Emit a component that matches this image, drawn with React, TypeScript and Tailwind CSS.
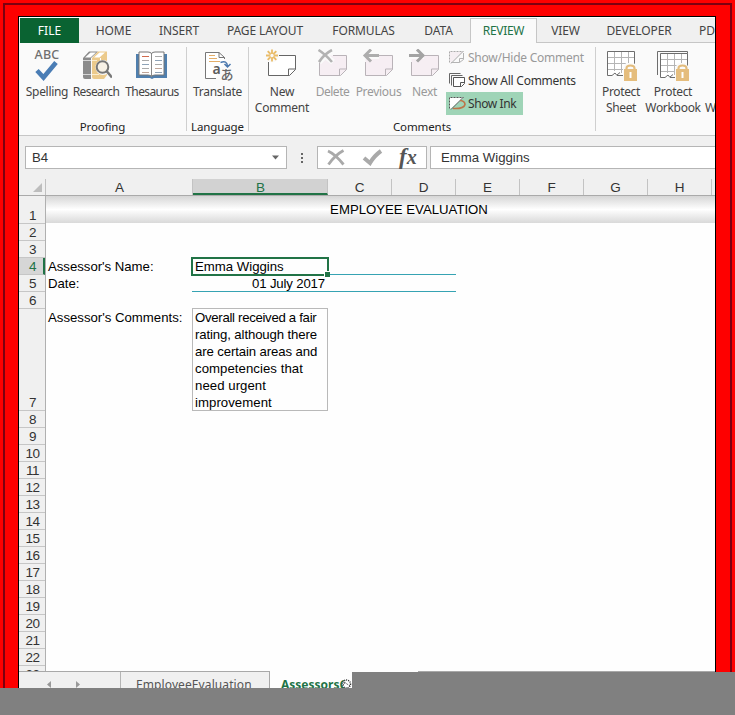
import type { ReactNode } from "react";
import clsx from "clsx";

const tabs = [
  { name: "HOME", width: "w-[69px]" },
  { name: "INSERT", width: "w-[62px]" },
  { name: "PAGE LAYOUT", width: "w-[110px]" },
  { name: "FORMULAS", width: "w-[87px]" },
  { name: "DATA", width: "w-[63px]" },
  { name: "REVIEW", width: "w-[67px]", active: true },
  { name: "VIEW", width: "w-[57px]" },
  { name: "DEVELOPER", width: "w-[90px]" },
];

const columns = [
  { name: "A", width: "w-[147px]" },
  { name: "B", width: "w-[135px]" },
  { name: "C", width: "w-16" },
  { name: "D", width: "w-16" },
  { name: "E", width: "w-16" },
  { name: "F", width: "w-16" },
  { name: "G", width: "w-16" },
  { name: "H", width: "w-16" },
];

const rows = Array.from({ length: 23 }, (_, i) => i + 1);

function SpellingIcon() {
  return (
    <div className="flex flex-col items-center">
      <span className="h-[12px] text-[12.5px] leading-[12px] font-medium tracking-[0.3px] text-[#6f6f6f]">ABC</span>
      <svg width="24" height="20" viewBox="0 0 24 20" fill="none">
        <path d="M2 9.5 L8.5 16.5 L21 1.5" stroke="#4a7db5" strokeWidth="4.6" />
      </svg>
    </div>
  );
}

function ResearchIcon() {
  return (
    <svg width="32" height="32" viewBox="0 0 32 32" fill="none">
      <path d="M3 9 L9 2.5 H18 L11 9 V30 H5 Q3 30 3 28 Z" fill="#8b8b8b" />
      <path d="M5 8.5 L10.5 3.5 H16 L10.5 8.5 Z" fill="#fff" />
      <path d="M3 11.5 H11 M3 25.5 H11" stroke="#d5d5d5" />
      <path d="M12 9 L18 2.5 H27 V26 L24 30 H14 Q12 30 12 28 Z" fill="#ecca8b" />
      <path d="M14 8.5 L19.5 3.5 H25 L19.5 8.5 Z" fill="#fff" />
      <path d="M12 11.5 H17 M12 25.5 H19" stroke="#fbeccc" />
      <path d="M20.5 9 V13" stroke="#fff" />
      <circle cx="23" cy="18.5" r="7.5" fill="#fafafa" />
      <circle cx="22.5" cy="18" r="5.8" fill="#f7f1e6" stroke="#777" strokeWidth="2" />
      <path d="M26.5 22 L32 28.5" stroke="#777" strokeWidth="2.6" />
    </svg>
  );
}

function ThesaurusIcon() {
  return (
    <svg width="32" height="32" viewBox="0 0 32 32" fill="none">
      <path d="M0 5 H31 V29 H18 L16 30 L14 29 H0 Z" fill="#4f7fae" />
      <path d="M3 3 H12 Q15.5 3 15.5 5 Q15.5 3 19 3 H28 V26 H19 Q15.5 26 15.5 28 Q15.5 26 12 26 H3 Z" fill="#fff" stroke="#777" />
      <path d="M15.5 5 V28" stroke="#888" />
      <path d="M6 7.5 H13" stroke="#d06b4f" />
      <path d="M6 11.5 H13 M6 19.5 H13 M19 7.5 H26 M19 15.5 H26" stroke="#aaa" />
      <path d="M6 15.5 H13 M19 11.5 H26 M19 23.5 H26" stroke="#8ea3b8" />
      <path d="M6 23.5 H13 M19 19.5 H26" stroke="#c0a598" />
    </svg>
  );
}

function TranslateIcon() {
  return (
    <div className="relative h-8 w-8">
      <svg width="32" height="32" viewBox="0 0 32 32" fill="none">
        <path d="M22.5 10 V8.5 L17 3.5 H3.5 V29.5 H14" fill="#fff" stroke="#777" />
        <path d="M17 3.5 V8.5 H22.5" stroke="#777" />
        <path d="M7 6.5 H13 M7 9.5 H15 M7 12.5 H18" stroke="#e4ae68" />
        <path d="M18.5 13.5 Q25 11 25.5 17 M22.5 15 L25.5 18 L28.5 15" stroke="#4a78ae" strokeWidth="1.5" />
      </svg>
      <span className="absolute top-[11px] left-[11px] text-[14px] leading-[18px] font-semibold text-[#5c5c5c]">a</span>
      <span className="absolute top-[17px] left-[19px] font-['Noto_Sans_CJK_JP',sans-serif] text-[13px] leading-[15px] font-medium text-[#666]">あ</span>
    </div>
  );
}

type NoteKind = "new" | "delete" | "previous" | "next";

function NoteIcon({ kind }: { kind: NoteKind }) {
  const line = kind === "new" ? "#666" : "#b9b3b8";
  const width = kind === "new" ? 34 : 35;
  return (
    <svg width={width} height="32" viewBox={`0 0 ${width} 32`} fill="none">
      <g transform={kind === "new" ? "translate(-1 0)" : undefined}>
        <path d="M4.5 6.5 H31.5 V20.5 L24.5 26.5 H4.5 Z" fill={kind === "new" ? "#fff" : "#f6eef3"} />
        <path
          d={
            kind === "new"
              ? "M15 6.5 H31.5 V20.5 L25.5 26.5 H4.5 V13"
              : "M18 6.5 H31.5 V20.5 L25.5 26.5 H4.5 V13"
          }
          stroke={line}
        />
        <path d="M31.5 20 H24.5 V26.5" stroke={line} />
      </g>
      {kind === "new" && (
        <g>
          <circle cx="7" cy="6.5" r="7" fill="#fafafa" />
          <path d="M7 0.5 V4 M7 9 V12.5 M1 6.5 H4.5 M9.5 6.5 H13 M2.7 2.2 L5 4.5 M9 8.5 L11.3 10.8 M2.7 10.8 L5 8.5 M9 4.5 L11.3 2.2" stroke="#e9bc69" strokeWidth="1.8" />
          <circle cx="7" cy="6.5" r="2.3" stroke="#e9bc69" strokeWidth="1.2" />
        </g>
      )}
      {kind === "delete" && (
        <g>
          <path d="M3 1 L18 13 M17 0 L4 13" stroke="#fafafa" strokeWidth="6" />
          <path d="M3.5 1 Q10 5 17 13 M17 1 Q9 5 4 13" stroke="#b3b3b3" strokeWidth="2.6" />
        </g>
      )}
      {kind === "previous" && (
        <g>
          <path d="M0 6.5 H18" stroke="#fafafa" strokeWidth="7" />
          <path d="M4 6.5 H18 M10 0.5 L4 6.5 L10 12.5" stroke="#adadad" strokeWidth="3" />
        </g>
      )}
      {kind === "next" && (
        <g>
          <path d="M1 6.5 H17" stroke="#fafafa" strokeWidth="7" />
          <path d="M2 6.5 H16 M10 0.5 L16 6.5 L10 12.5" stroke="#a3a3a3" strokeWidth="3" />
        </g>
      )}
    </svg>
  );
}

function ProtectIcon({ workbook }: { workbook?: boolean }) {
  return (
    <svg width="32" height="33" viewBox="0 0 32 33" fill="none">
      {workbook && <path d="M0.5 26 V2.5 H30.5 V5" stroke="#6d6d6d" />}
      <g transform={workbook ? "translate(3 4)" : "translate(2 2)"}>
        <path d="M0.5 0.5 H28 V24 H16 L12 21 L8 24 H0.5 Z" fill="#fff" />
        <path d="M7.5 0.5 V20 M14.5 0.5 V22 M21.5 0.5 V16 M0.5 6.5 H28 M0.5 12.5 H28 M0.5 18.5 H18" stroke="#b5b5b5" />
        <path d="M16 24.5 H10 L8 22 L5 24.5 H0.5 V0.5 H27.5 V13 M10 24 L13 21.5" stroke="#6d6d6d" />
      </g>
      <path d="M18 32 V19 L21 14 H29 L32 19 V32 Z" fill="#fafafa" />
      <path d="M21.5 22 V19.5 Q21.5 16.5 25.5 16.5 Q29.5 16.5 29.5 19.5 V22" stroke="#e3bc7c" strokeWidth="2.2" />
      <rect x="19" y="20" width="13" height="12" fill="#e5bd7d" />
      <path d="M25.5 23 V29" stroke="#fff" strokeWidth="2" />
    </svg>
  );
}

function InkIcon({ muted }: { muted?: boolean }) {
  return (
    <svg width="17" height="15" viewBox="0 0 17 15" fill="none">
      <path d="M0.5 1.5 H14.5 L2 12.5 H0.5 Z" fill={muted ? "#f5eef2" : "#fff"} />
      <path d="M0.5 12.5 V1.5 H14.5" stroke={muted ? "#aaa" : "#555"} strokeDasharray="2 1" />
      <path d="M2 13.5 L14 1.5" stroke={muted ? "#aaa" : "#666"} />
      {muted ? (
        <path d="M14.5 3 V9.5 L10.5 12.5 H2 M14.5 8.5 H10.5 V12.5" stroke="#b4b4b4" />
      ) : (
        <path d="M11 4.5 Q16 5 16 8.5 Q15 13 4 12.5" stroke="#bd7448" strokeWidth="1.6" />
      )}
    </svg>
  );
}

function AllCommentsIcon() {
  return (
    <svg width="17" height="15" viewBox="0 0 17 15" fill="none">
      <path d="M0.5 10.5 V0.5 H11.5 M2.5 12.5 V2.5 H13.5" stroke="#666" />
      <path d="M4.5 4.5 H15.5 V10.5 L12.5 13.5 H4.5 Z M15.5 9.5 H11.5 V13.5" fill="#fff" stroke="#555" />
    </svg>
  );
}

type RibbonButtonProps = { icon: ReactNode; label: string; width: string; tracking?: string; muted?: boolean };

function RibbonButton({ icon, label, width, tracking = "tracking-[-0.3px]", muted }: RibbonButtonProps) {
  return (
    <div className={clsx("flex shrink-0 flex-col items-center", width, muted ? "text-[#999]" : "text-[#444]")}>
      <div className="flex h-[34px] items-start">{icon}</div>
      <span className={clsx("mt-[1px] text-center text-[12px] leading-4 whitespace-pre", tracking)}>{label}</span>
    </div>
  );
}

function RibbonGroup({ name, width, className, children }: { name: string; width: string; className?: string; children: ReactNode }) {
  return (
    <div className={clsx("flex h-[92px] shrink-0 pt-1 pb-1", width)}>
      <div className="flex grow flex-col border-r border-[#cfcfcf]">
        <div className={clsx("flex h-[72px] shrink-0", className)}>{children}</div>
        <div className="-mb-1 text-center text-[11.5px] leading-4 tracking-[-0.1px] text-[#222]">{name}</div>
      </div>
    </div>
  );
}

function Ribbon() {
  return (
    <div className="flex h-[93px] shrink-0 overflow-hidden border-b border-[#c6c6c6] bg-[#fafafa]">
      <RibbonGroup name="Proofing" width="w-[168px]" className="pl-[5px] pt-[2px]">
        <RibbonButton icon={<SpellingIcon />} label="Spelling" width="w-[46px]" />
        <RibbonButton icon={<ResearchIcon />} label="Research" width="w-[52px]" tracking="tracking-[-0.6px]" />
        <RibbonButton icon={<ThesaurusIcon />} label="Thesaurus" width="w-[60px]" tracking="tracking-[-0.6px]" />
      </RibbonGroup>
      <RibbonGroup name="Language" width="w-[62px]" className="justify-center pt-[2px]">
        <RibbonButton icon={<TranslateIcon />} label="Translate" width="w-[60px]" />
      </RibbonGroup>
      <RibbonGroup name="Comments" width="w-[347px]" className="pl-1 pt-[2px]">
        <RibbonButton icon={<NoteIcon kind="new" />} label={"New\nComment"} width="w-[58px]" tracking="tracking-[-0.2px]" />
        <RibbonButton icon={<NoteIcon kind="delete" />} label="Delete" width="w-[43px]" tracking="tracking-[-0.5px]" muted />
        <RibbonButton icon={<NoteIcon kind="previous" />} label="Previous" width="w-[49px]" muted />
        <RibbonButton icon={<NoteIcon kind="next" />} label="Next" width="w-[43px]" muted />
        <div className="-mt-[3px] flex flex-col items-start text-[12px] tracking-[-0.25px] text-[#333]">
          <div className="flex h-[23px] items-center gap-[2px] pl-[3px] whitespace-nowrap text-[#999]">
            <InkIcon muted />
            Show/Hide Comment
          </div>
          <div className="flex h-[23px] items-center gap-[2px] pl-[3px] whitespace-nowrap">
            <AllCommentsIcon />
            Show All Comments
          </div>
          <div className="flex h-[23px] w-[77px] items-center gap-[2px] bg-[#9fd4b7] pl-[3px] tracking-[-0.4px] whitespace-nowrap">
            <InkIcon />
            Show Ink
          </div>
        </div>
      </RibbonGroup>
      <div className="flex pt-[6px] pl-[1px]">
        <RibbonButton icon={<ProtectIcon />} label={"Protect\nSheet"} width="w-[48px]" tracking="tracking-[-0.35px]" />
        <RibbonButton icon={<ProtectIcon workbook />} label={"Protect\nWorkbook"} width="w-[56px]" />
        <span className="mt-[51px] ml-1 text-[12px] leading-4 text-[#444]">W</span>
      </div>
    </div>
  );
}

function FormulaBar() {
  return (
    <div className="flex h-[43px] shrink-0 pt-[10px] pl-[6px] font-['Liberation_Sans',sans-serif] text-[13.2px] text-[#333]">
      <div className="flex h-[23px] w-[262px] shrink-0 items-center justify-between border border-[#b5b5b5] bg-white pr-[6px] pl-[6px]">
        B4
        <svg width="9" height="5" viewBox="0 0 9 5">
          <path d="M1 0.5 H8 L4.5 4.5 Z" fill="#666" />
        </svg>
      </div>
      <div className="flex h-[23px] w-[30px] shrink-0 flex-col items-center justify-center gap-[2px]">
        <i className="h-[2px] w-[2px] bg-[#666]" />
        <i className="h-[2px] w-[2px] bg-[#666]" />
        <i className="h-[2px] w-[2px] bg-[#666]" />
      </div>
      <div className="flex h-[23px] w-[110px] shrink-0 items-center border border-[#b5b5b5] bg-white pl-[9px]">
        <svg width="18" height="17" viewBox="0 0 18 17" fill="none">
          <path d="M1 2 Q8 5 16.5 15.5 M16.5 1.5 Q8 6 1.5 15.5" stroke="#a9a9a9" strokeWidth="2.8" />
        </svg>
        <svg className="ml-[17px]" width="21" height="17" viewBox="0 0 21 17" fill="none">
          <path d="M2 9 L8 14 Q12 7 19 2" stroke="#a9a9a9" strokeWidth="4" />
        </svg>
        <span className="mt-[-1px] ml-[16px] font-['Liberation_Serif',serif] text-[23px] leading-[22px] font-bold text-[#555] italic">
          f<span className="text-[20px]">x</span>
        </span>
      </div>
      <div className="ml-[3px] flex h-[23px] grow items-center border border-r-0 border-[#b5b5b5] bg-white pl-[10px]">Emma Wiggins</div>
    </div>
  );
}

function ColumnHeaders() {
  return (
    <div className="flex h-[17px] shrink-0 overflow-hidden border-b border-[#aaa] text-[13.5px] text-[#333]">
      <div className="flex w-[27px] shrink-0 items-end justify-end border-r border-[#c0c0c0] pr-[3px] pb-[3px]">
        <svg width="9" height="9" viewBox="0 0 9 9">
          <path d="M9 0 V9 H0 Z" fill="#bdbdbd" />
        </svg>
      </div>
      {columns.map((col) => (
        <div
          key={col.name}
          className={clsx(
            "h-4 shrink-0 border-r border-[#c3c3c3] text-center leading-[17px]",
            col.width,
            col.name === "A" && "pl-[1px]",
            col.name === "B" && "border-b-2 border-b-[#217346] bg-[#d2d2d2] pl-[1px] text-[#217346]"
          )}
        >
          {col.name}
        </div>
      ))}
    </div>
  );
}

function RowHeaders() {
  return (
    <div className="flex h-[475px] w-[27px] shrink-0 flex-col overflow-hidden border-r border-[#b0b0b0] text-[13.5px] tracking-[-0.5px] text-[#333]">
      {rows.map((n) => (
        <div
          key={n}
          className={clsx(
            "flex shrink-0 items-end justify-center border-b border-[#c6c6c6] pl-[1px] leading-[14px]",
            n === 1 ? "h-7" : n === 7 ? "h-[102px]" : "h-[17px]",
            n === 4 && "border-r-2 border-r-[#217346] bg-[#d6d6d6] pl-[3px] text-[#217346]"
          )}
        >
          {n}
        </div>
      ))}
    </div>
  );
}

function Sheet() {
  return (
    <div className="flex grow flex-col bg-[#fefefe] text-[13.2px] leading-[17px] whitespace-nowrap text-black">
      <div className="flex h-[27px] shrink-0 justify-center bg-linear-to-b from-[#d6d6d6] via-white to-[#d9d9d9] pt-[5px]">
        <span className="ml-[57px]">EMPLOYEE EVALUATION</span>
      </div>
      <div className="mt-[34px] flex h-[18px]">
        <div className="w-[145px] pt-[1px] pl-[2px] tracking-[-0.02px]">Assessor's Name:</div>
        <div className="relative h-[19px] w-[138px] border-2 border-[#217346] pl-[2px] leading-4">
          Emma Wiggins
          <i className="absolute -right-[3px] -bottom-[3px] h-[6px] w-[6px] border-t border-l border-white bg-[#217346]" />
        </div>
        <div className="w-[127px] border-b border-[#36a3b3]" />
      </div>
      <div className="flex h-[17px]">
        <div className="w-[146px] pl-[2px]">Date:</div>
        <div className="w-[264px] border-b border-[#36a3b3]">
          <div className="w-[133px] text-right tracking-[-0.15px]">01 July 2017</div>
        </div>
      </div>
      <div className="mt-4 flex h-[103px]">
        <div className="w-[146px] pt-[1px] pl-[2px]">Assessor's Comments:</div>
        <div className="w-[136px] border border-[#b9b9b9] pl-[2px] tracking-[-0.12px] whitespace-pre">
          <div className="tracking-[-0.3px]">Overall received a fair</div>
          {"rating, although there\nare certain areas and\n"}
          <div className="tracking-[0.05px]">{"competencies that\nneed urgent\nimprovement"}</div>
        </div>
      </div>
    </div>
  );
}

function SheetTabs() {
  return (
    <div className="flex h-[17px] overflow-hidden text-[12px] leading-[26px]">
      <div className="flex w-[251px] border-t border-r border-[#a8a8a8] text-[#555]">
        <div className="flex w-[102px] items-start gap-[25px] border-r border-[#b5b5b5] pt-[9px] pl-[28px]">
          <svg width="4" height="7" viewBox="0 0 4 7">
            <path d="M4 0 V7 L0 3.5 Z" fill="#999" />
          </svg>
          <svg width="4" height="7" viewBox="0 0 4 7">
            <path d="M0 0 V7 L4 3.5 Z" fill="#999" />
          </svg>
        </div>
        <span className="pl-[15px] tracking-[0.1px]">EmployeeEvaluation</span>
      </div>
      <div className="flex w-[148px] bg-[#fefefe] pt-px pl-[11px] font-bold text-[#217346]">AssessorsC</div>
      <div className="grow border-t border-[#a8a8a8]" />
    </div>
  );
}

export default function App() {
  return (
    <div className="relative flex h-[715px] w-[735px] flex-col overflow-hidden bg-[#808080] font-['Noto_Sans','Open_Sans',sans-serif]">
      <div className="h-[688px] overflow-hidden bg-[#fe0000] pt-[3px] pl-[3px]">
        <div className="h-[700px] w-[729px] border-2 border-[#7c0010] pt-[11px] pl-[13px]">
          <div className="flex h-[690px] w-[698px] flex-col overflow-hidden border border-black bg-[#f0f0f0]">
            <div className="flex h-[26px] shrink-0 border-t border-white pl-[1px] text-[12px] text-[#444]">
              <div className="flex h-[25px] w-[59px] shrink-0 items-center justify-center bg-[#0a6332] pt-px text-white">FILE</div>
              {tabs.map((tab) => (
                <div
                  key={tab.name}
                  className={clsx(
                    "flex h-[25px] shrink-0 items-center justify-center whitespace-nowrap",
                    tab.width,
                    tab.active
                      ? "border-x border-t border-[#c6c6c6] bg-[#fafafa] tracking-[-0.3px] text-[#217346]"
                      : "border-b border-[#c6c6c6] pt-[2px] tracking-[-0.1px]"
                  )}
                >
                  {tab.name}
                </div>
              ))}
              <div className="flex h-[25px] grow items-center border-b border-[#c6c6c6] pt-[2px] pl-[15px]">PD</div>
            </div>
            <Ribbon />
            <FormulaBar />
            <div className="flex h-[492px] shrink-0 flex-col font-['Liberation_Sans',sans-serif]">
              <ColumnHeaders />
              <div className="flex h-[475px]">
                <RowHeaders />
                <Sheet />
              </div>
            </div>
            <SheetTabs />
          </div>
        </div>
      </div>
      <svg className="absolute top-[679px] left-[341px]" width="11" height="9" viewBox="0 0 11 9" fill="none">
        <circle cx="5.5" cy="5" r="4" fill="#fff" stroke="#333" strokeWidth="1.5" strokeDasharray="1 1" />
        <path d="M3 3 L9 7 M2 6 L5 3" stroke="#333" strokeDasharray="1 1" />
      </svg>
      {/* grey panel covering the lower right of the window */}
      <div className="absolute top-[672px] left-[352px] h-4 w-[383px] bg-[#808080]" />
    </div>
  );
}
